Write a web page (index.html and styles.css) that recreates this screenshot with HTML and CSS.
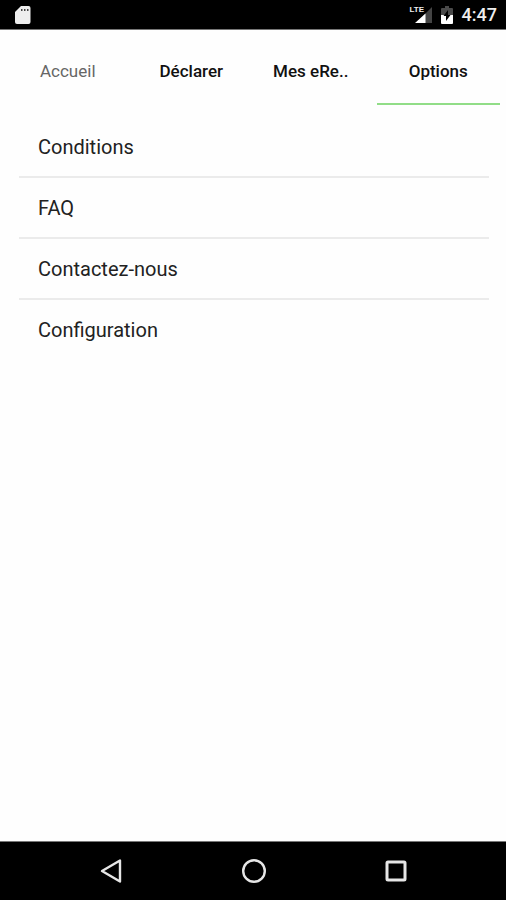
FILE: index.html
```html
<!DOCTYPE html>
<html lang="fr">
<head>
<meta charset="utf-8">
<meta name="viewport" content="width=device-width, initial-scale=1">
<title>Options</title>
<link rel="stylesheet" href="styles.css">
</head>
<body>
<header class="status">
  <svg class="sd" width="16" height="20" viewBox="0 0 16 20" aria-hidden="true">
    <path d="M6 1h7.500q2 0 2 2v14q0 2-2 2h-11.500q-2 0-2-2v-10z" fill="#eee"/>
    <path d="M6 4h1.500v2H6zM9 4h1.500v2H9zM12 4h1.500v2H12z" fill="#444"/>
  </svg>
  <div class="indicators">
    <div class="network">
      <svg width="22" height="18" viewBox="0 0 22 18" aria-hidden="true">
        <path d="M22 1v16h-16z" fill="#444"/>
        <path d="M15.500 7.500v9.500H5z" fill="#fff"/>
      </svg>
      <span class="lte">LTE</span>
    </div>
    <svg width="12" height="18" viewBox="0 0 12 18" aria-hidden="true">
      <path d="M4 0h4v2h3q1 0 1 1v6H0V3q0-1 1-1h3z" fill="#4a4a4a"/>
      <path d="M0 9h12v8q0 1-1 1H1q-1 0-1-1z" fill="#fff"/>
      <path d="M7 4v5h2.500L5 15v-5H2.500z" fill="#000"/>
    </svg>
    <time class="clock">4:47</time>
  </div>
</header>
<nav class="tabs">
  <button class="tab tab-muted">Accueil</button>
  <button class="tab">Déclarer</button>
  <button class="tab tab-cut">Mes eRe..</button>
  <button class="tab tab-active" aria-current="page">Options</button>
</nav>
<main class="content">
  <ul class="options">
    <li><a href="#conditions">Conditions</a></li>
    <li><a href="#faq">FAQ</a></li>
    <li><a href="#contact">Contactez-nous</a></li>
    <li><a href="#configuration">Configuration</a></li>
  </ul>
</main>
<footer class="system">
  <button aria-label="Retour"><svg width="26" height="26" viewBox="0 0 26 26"><path d="M21 2.500v21L3 13z" fill="none" stroke="#e6e6e6" stroke-width="2.400" stroke-linejoin="round"/></svg></button>
  <button aria-label="Accueil système"><svg width="26" height="26" viewBox="0 0 26 26"><circle cx="13" cy="13" r="10.800" fill="none" stroke="#e6e6e6" stroke-width="2.400"/></svg></button>
  <button aria-label="Applications récentes"><svg width="26" height="26" viewBox="0 0 26 26"><rect x="4" y="4" width="18" height="18" rx="1" fill="none" stroke="#e6e6e6" stroke-width="3"/></svg></button>
</footer>
</body>
</html>
```
FILE: styles.css
```css
* {
  box-sizing: border-box;
}

body {
  display: flex;
  flex-direction: column;
  min-height: 100vh;
  margin: 0;
  background: #fefefe;
  color: #222;
  font-family: Roboto, "Liberation Sans", sans-serif;
}

button {
  padding: 0;
  border: 0;
  background: none;
  color: inherit;
  font: inherit;
}

.status {
  display: flex;
  align-items: center;
  justify-content: space-between;
  height: 30px;
  padding: 1px 9px 0 15px;
  border-bottom: 1px solid #777;
  background: #000;
  color: #eee;
}

.indicators {
  display: flex;
  align-items: center;
  gap: 9px;
}

.network {
  position: relative;
  height: 18px;
}

.network svg {
  display: block;
}

.lte {
  position: absolute;
  top: -1px;
  left: 0;
  font-family: "Liberation Sans", sans-serif;
  font-size: 8px;
  font-weight: 700;
  line-height: 10px;
}

.clock {
  font-size: 18px;
  font-weight: 500;
  line-height: 20px;
}

.tabs {
  display: grid;
  grid-template-columns: repeat(4, 1fr);
  height: 75px;
  padding: 0 6px;
}

.tab {
  padding-top: 8px;
  border-bottom: 2px solid transparent;
  color: #111;
  font-size: 17px;
  font-weight: 500;
  line-height: 20px;
}

.tab-muted {
  color: #666;
  font-weight: 400;
}

.tab-cut {
  padding-right: 8px;
}

.tab-active {
  border-bottom-color: #91dd87;
}

.content {
  flex: 1;
  padding: 12px 17px 0 19px;
}

.options {
  margin: 0;
  padding: 0;
  list-style: none;
}

.options li + li {
  border-top: 2px solid #ebebeb;
}

.options a {
  display: block;
  padding: 18px 19px 17px;
  color: inherit;
  font-size: 20px;
  line-height: 24px;
  text-decoration: none;
}

.system {
  display: flex;
  align-items: center;
  justify-content: center;
  gap: 116px;
  height: 59px;
  padding-left: 2px;
  border-top: 1px solid #777;
  background: #000;
}

.system svg {
  display: block;
}
```
